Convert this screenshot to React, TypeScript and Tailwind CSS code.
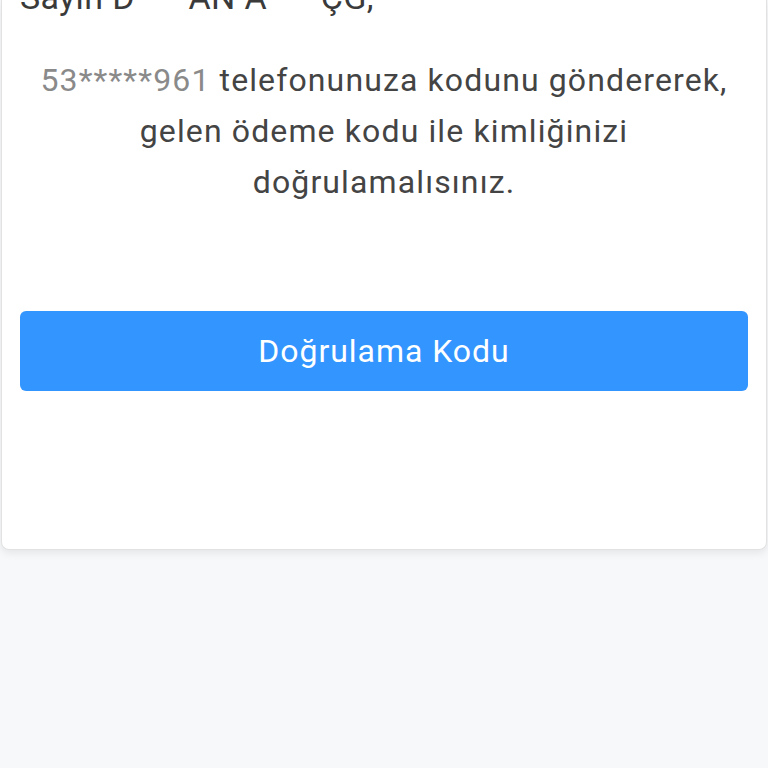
export default function App() {
  return (
    <div className="min-h-screen overflow-hidden bg-[#f7f8fa] font-['Roboto',sans-serif]">
      <div className="mx-px flex flex-col rounded-b-lg border border-t-0 border-[#e2e2e2] bg-white px-[18px] pb-[158px] shadow-[0_3px_8px_rgba(0,0,0,0.08)]">
        <p className="-mt-[23px] text-[34px] leading-[40px] tracking-[0.01em] text-[#3a3a3a]">
          Sayın D*** AN A*** ÇG,
        </p>
        <p className="mt-[38px] px-2 text-center text-[32px] leading-[51px] tracking-[0.035em] text-[#444]">
          <span className="text-[#8a8a8a]">53*****961</span> telefonunuza kodunu göndererek,
          gelen ödeme kodu ile kimliğinizi doğrulamalısınız.
        </p>
        <button
          type="button"
          className="mt-[103px] flex h-[80px] w-full items-center justify-center rounded-md bg-[#3395ff] text-[32px] tracking-[0.03em] text-white"
        >
          Doğrulama Kodu
        </button>
      </div>
    </div>
  );
}
